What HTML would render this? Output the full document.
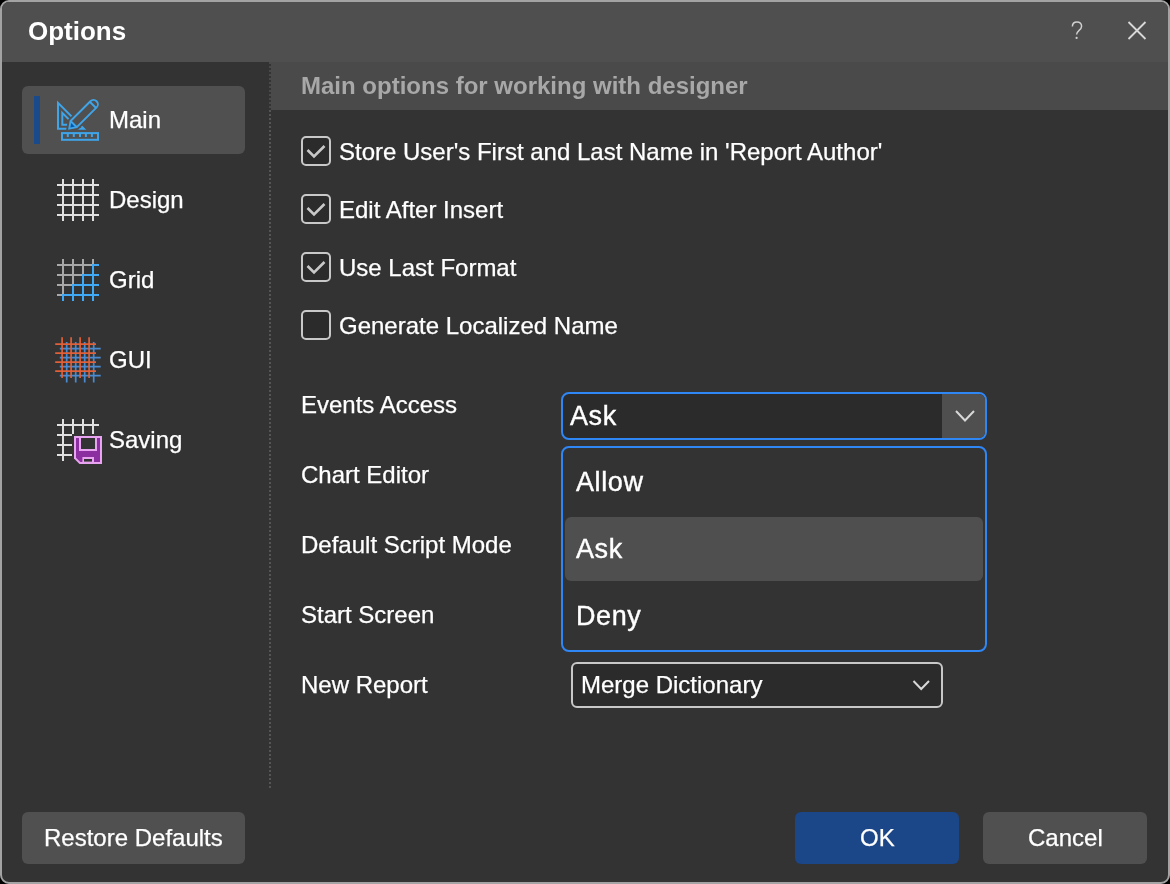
<!DOCTYPE html>
<html><head><meta charset="utf-8">
<style>
html,body{margin:0;padding:0;width:1170px;height:884px;overflow:hidden;background:#000;}
*{box-sizing:border-box;}
body{font-family:"Liberation Sans",sans-serif;color:#fff;position:relative;}
.abs{position:absolute;}
.t{position:absolute;white-space:pre;line-height:1;will-change:transform;}
.f24{font-size:24px;-webkit-text-stroke:0.25px #fff;}
.f28{font-size:27px;-webkit-text-stroke:0.4px #fff;letter-spacing:0.6px;}
svg{position:absolute;overflow:visible;}
</style></head><body>
<div class="abs" style="left:0;top:0;width:1170px;height:884px;border:2px solid #a3a3a3;border-radius:9px;background:#333;"></div>
<div class="abs" style="left:2px;top:2px;width:1166px;height:60px;background:#4f4f4f;border-radius:7px 7px 0 0;"></div>
<div class="t" style="left:28px;top:17.5px;font-size:26px;font-weight:bold;">Options</div>
<svg style="left:0;top:0" width="1" height="1"><path d="M1072.4 26.6 C1072.4 23.6 1074.5 21.9 1077 21.9 C1079.7 21.9 1081.6 23.8 1081.6 26.3 C1081.6 28.6 1080.1 29.7 1078.7 30.8 C1077.2 32 1076.6 32.7 1076.6 34.6" stroke="#d0d0d0" stroke-width="1.5" fill="none"/><circle cx="1076.6" cy="37.9" r="1.1" fill="#d0d0d0"/></svg>
<svg style="left:0;top:0" width="1170" height="62"><path d="M1128.5 22 L1145.5 39 M1145.5 22 L1128.5 39" stroke="#d8d8d8" stroke-width="1.8" fill="none"/></svg>

<!-- separator -->
<div class="abs" style="left:269px;top:62px;width:2px;height:726px;background:repeating-linear-gradient(to bottom,#555 0,#555 2px,transparent 2px,transparent 4px);"></div>
<!-- header -->
<div class="abs" style="left:271px;top:62px;width:897px;height:48px;background:#4a4a4a;"></div>
<div class="abs" style="left:269px;top:62px;width:2px;height:48px;background:repeating-linear-gradient(to bottom,#4a4a4a 0,#4a4a4a 2px,#333 2px,#333 4px);"></div>
<div class="t" style="left:301px;top:74px;font-size:24px;font-weight:bold;color:#a8a8a8;">Main options for working with designer</div>

<!-- sidebar selected -->
<div class="abs" style="left:22px;top:86px;width:223px;height:68px;background:#505050;border-radius:6px;"></div>
<div class="abs" style="left:34px;top:96px;width:6px;height:48px;background:#1a4a8a;"></div>
<div class="t f24" style="left:109px;top:108px;">Main</div>
<div class="t f24" style="left:109px;top:188px;">Design</div>
<div class="t f24" style="left:109px;top:268px;">Grid</div>
<div class="t f24" style="left:109px;top:348px;">GUI</div>
<div class="t f24" style="left:109px;top:428px;">Saving</div>

<!-- Main icon -->
<svg style="left:50px;top:95px" width="55" height="50" viewBox="0 0 55 50">
  <g fill="none" stroke="#3fa4e8" stroke-width="2">
    <path d="M8 7.9 L8 33.8 L33.9 33.8 Z" stroke-linejoin="miter" stroke-miterlimit="10"/>
    <path d="M12.3 17.9 L12.3 29.8 L24.2 29.8 Z" stroke-miterlimit="10"/>
    <rect x="12" y="38.1" width="36" height="6.7"/>
  </g>
  <g fill="#3fa4e8">
    <rect x="16.8" y="39" width="2" height="3"/>
    <rect x="22.8" y="39" width="2" height="3"/>
    <rect x="29" y="39" width="2" height="3"/>
    <rect x="34.9" y="39" width="2" height="3"/>
    <rect x="40.9" y="39" width="2" height="3"/>
  </g>
  <g transform="translate(17.6 35.2) rotate(-45)">
    <path d="M2.3 0 L8.6 -4.4 L36.6 -4.4 A4.4 4.4 0 0 1 36.6 4.4 L8.6 4.4 Z" fill="#505050" stroke="#505050" stroke-width="5.6" stroke-linejoin="miter" stroke-miterlimit="10"/>
    <path d="M2.3 0 L8.6 -4.4 L8.6 4.4 Z" fill="#0058ac"/>
    <path d="M2.3 0 L8.6 -4.4 L36.6 -4.4 A4.4 4.4 0 0 1 36.6 4.4 L8.6 4.4 Z M8.6 -4.4 L8.6 4.4 M35.8 -4.4 L35.8 4.4" fill="none" stroke="#3fa4e8" stroke-width="1.9" stroke-linejoin="miter" stroke-miterlimit="10"/>
  </g>
</svg>

<!-- Design icon -->
<svg style="left:57px;top:179px" width="42" height="42">
  <g stroke="#e0e0e0" stroke-width="2">
    <path d="M6 0V42M16 0V42M26 0V42M36 0V42M0 6H42M0 16H42M0 26H42M0 36H42"/>
  </g>
</svg>
<!-- Grid icon -->
<svg style="left:57px;top:259px" width="42" height="42">
  <g stroke="#a8a8a8" stroke-width="2" fill="none">
    <path d="M6 0V36M16 0V26M26 0V16M36 0V6M0 6H36M0 16H26M0 26H16M0 36H6"/>
  </g>
  <g stroke="#3fa9f5" stroke-width="2" fill="none">
    <path d="M36 5V42M26 15V42M16 25V42M6 35V42M35 6H42M25 16H42M15 26H42M5 36H42"/>
  </g>
</svg>
<!-- GUI icon -->
<svg style="left:55px;top:337px" width="46" height="46">
  <g stroke="#4a8ad0" stroke-width="1.7" fill="none">
    <path d="M11.7 5V45.6M20.7 5V45.6M29.7 5V45.6M38.7 5V45.6M4.8 11.7H45.7M4.8 20.7H45.7M4.8 29.7H45.7M4.8 38.7H45.7"/>
  </g>
  <g stroke="#e0603a" stroke-width="1.7" fill="none">
    <path d="M7.1 0.2V40.9M16.1 0.2V40.9M25.1 0.2V40.9M34.1 0.2V40.9M0.2 7.2H41M0.2 16.2H41M0.2 25.2H41M0.2 34.2H41"/>
  </g>
</svg>
<!-- Saving icon -->
<svg style="left:57px;top:419px" width="46" height="46">
  <g stroke="#e0e0e0" stroke-width="2" fill="none">
    <path d="M6 0V42M16 0V15M26 0V15M36 0V15M0 6H42M0 16H15M0 26H15M0 36H15"/>
  </g>
  <path d="M17 17H45V45H22.5L17 39.5Z" fill="#e8a4f0"/>
  <path d="M19 19H43V43H23.3L19 38.7Z" fill="#8b2fa0"/>
  <rect x="22" y="17" width="18" height="15" fill="#e8a4f0"/>
  <rect x="24" y="19" width="14" height="11" fill="#333"/>
  <rect x="25.4" y="38" width="11.6" height="5.3" fill="#e8a4f0"/>
  <rect x="27" y="40" width="8" height="2.6" fill="#333"/>
</svg>

<!-- checkboxes -->
<div class="abs" style="left:301px;top:136px;width:30px;height:30px;border:2px solid #c8c8c8;border-radius:5px;background:#2b2b2b;"></div>
<div class="abs" style="left:301px;top:194px;width:30px;height:30px;border:2px solid #c8c8c8;border-radius:5px;background:#2b2b2b;"></div>
<div class="abs" style="left:301px;top:252px;width:30px;height:30px;border:2px solid #c8c8c8;border-radius:5px;background:#2b2b2b;"></div>
<div class="abs" style="left:301px;top:310px;width:30px;height:30px;border:2px solid #c8c8c8;border-radius:5px;background:#2b2b2b;"></div>
<svg style="left:0;top:0" width="1" height="1">
  <g stroke="#c8c8c8" stroke-width="2.6" fill="none">
    <path d="M307.5 150 L314 156.5 L324.5 146"/>
    <path d="M307.5 208 L314 214.5 L324.5 204"/>
    <path d="M307.5 266 L314 272.5 L324.5 262"/>
  </g>
</svg>
<div class="t f24" style="left:339px;top:140px;">Store User's First and Last Name in 'Report Author'</div>
<div class="t f24" style="left:339px;top:198px;">Edit After Insert</div>
<div class="t f24" style="left:339px;top:256px;">Use Last Format</div>
<div class="t f24" style="left:339px;top:314px;">Generate Localized Name</div>

<div class="t f24" style="left:300.6px;top:393px;">Events Access</div>
<div class="t f24" style="left:300.6px;top:463px;">Chart Editor</div>
<div class="t f24" style="left:300.6px;top:533px;">Default Script Mode</div>
<div class="t f24" style="left:300.6px;top:603px;">Start Screen</div>
<div class="t f24" style="left:300.6px;top:673px;">New Report</div>

<!-- combo -->
<div class="abs" style="left:561px;top:392px;width:426px;height:48px;border:2px solid #2f86f5;border-radius:8px;background:#2b2b2b;overflow:hidden;">
  <div class="abs" style="left:379px;top:0;width:43px;height:44px;background:#4f4f4f;"></div>
</div>
<svg style="left:0;top:0" width="1" height="1"><path d="M956 411 L965 420.5 L974 411" stroke="#d8d8d8" stroke-width="2" fill="none"/></svg>
<div class="t f28" style="left:570px;top:403px;">Ask</div>

<!-- popup -->
<div class="abs" style="left:561px;top:446px;width:426px;height:206px;border:2px solid #2f86f5;border-radius:8px;background:#333;"></div>
<div class="abs" style="left:565px;top:517px;width:418px;height:64px;background:#4f4f4f;border-radius:6px;"></div>
<div class="t f28" style="left:576px;top:469px;">Allow</div>
<div class="t f28" style="left:576px;top:536px;">Ask</div>
<div class="t f28" style="left:576px;top:603px;">Deny</div>

<!-- merge combo -->
<div class="abs" style="left:571px;top:662px;width:372px;height:46px;border:2px solid #c8c8c8;border-radius:6px;background:#2b2b2b;"></div>
<svg style="left:0;top:0" width="1" height="1"><path d="M913.5 681 L921.2 689 L929 681" stroke="#d8d8d8" stroke-width="2" fill="none"/></svg>
<div class="t f24" style="left:580.5px;top:673px;">Merge Dictionary</div>

<!-- buttons -->
<div class="abs" style="left:22px;top:812px;width:223px;height:52px;background:#505050;border-radius:6px;"></div>
<div class="t f24" style="left:43.6px;top:825.6px;">Restore Defaults</div>
<div class="abs" style="left:795px;top:812px;width:164px;height:52px;background:#1b4687;border-radius:6px;"></div>
<div class="t f24" style="left:859.6px;top:826px;">OK</div>
<div class="abs" style="left:983px;top:812px;width:164px;height:52px;background:#505050;border-radius:6px;"></div>
<div class="t f24" style="left:1027.6px;top:826px;">Cancel</div>
</body></html>
